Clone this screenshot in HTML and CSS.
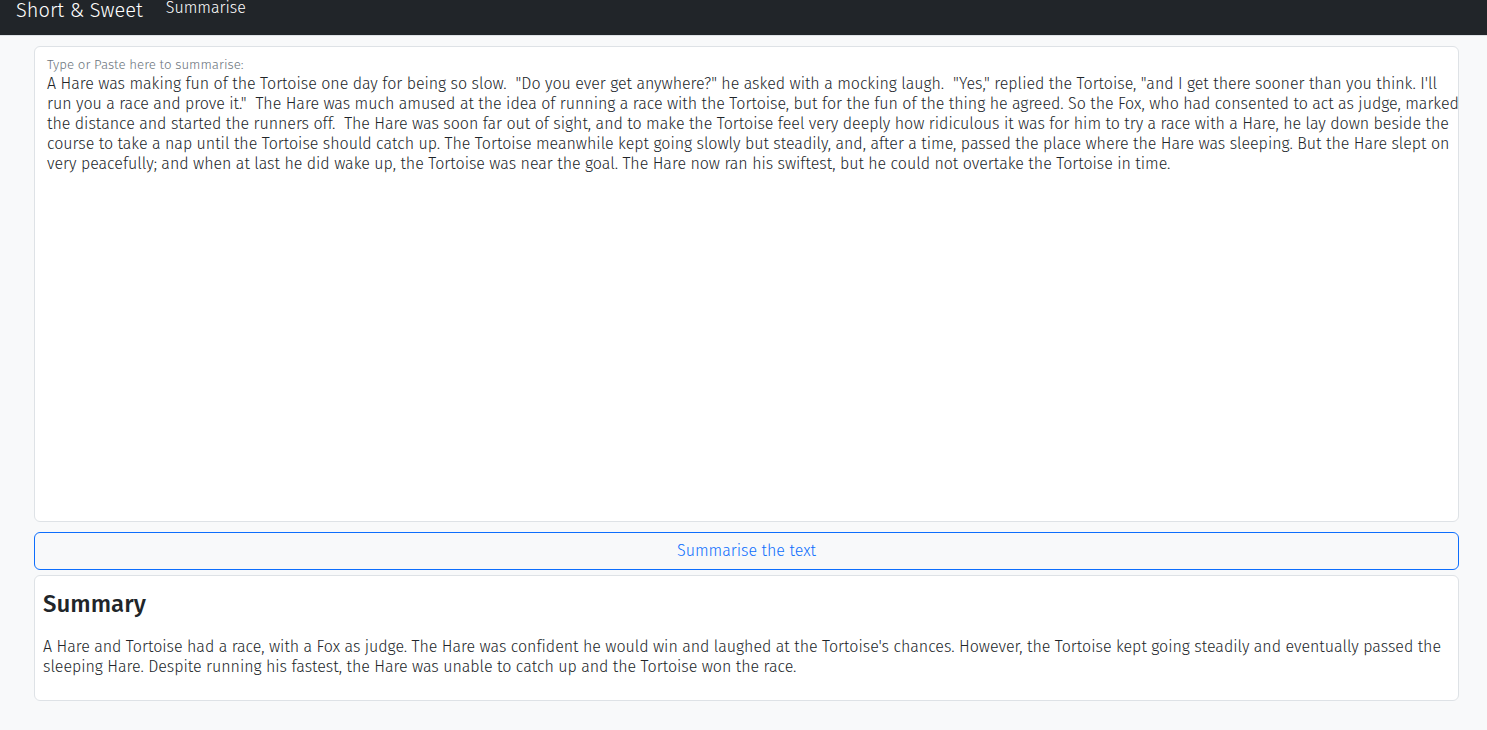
FILE: index.html
```html
<!DOCTYPE html>
<html lang="en">
<head>
<meta charset="utf-8">
<title>Short &amp; Sweet</title>
<link rel="stylesheet" href="styles.css">
</head>
<body>
<nav class="navbar">
  <span class="brand">Short &amp; Sweet</span>
  <span class="nav-link">Summarise</span>
</nav>
<main class="container">
  <div class="floating">
    <label class="float-label">Type or Paste here to summarise:</label>
    <div class="input-text">
      <div class="line">A Hare was making fun of the Tortoise one day for being so slow.  "Do you ever get anywhere?" he asked with a mocking laugh.  "Yes," replied the Tortoise, "and I get there sooner than you think. I'll</div>
      <div class="line">run you a race and prove it."  The Hare was much amused at the idea of running a race with the Tortoise, but for the fun of the thing he agreed. So the Fox, who had consented to act as judge, marked</div>
      <div class="line">the distance and started the runners off.  The Hare was soon far out of sight, and to make the Tortoise feel very deeply how ridiculous it was for him to try a race with a Hare, he lay down beside the</div>
      <div class="line">course to take a nap until the Tortoise should catch up. The Tortoise meanwhile kept going slowly but steadily, and, after a time, passed the place where the Hare was sleeping. But the Hare slept on</div>
      <div class="line">very peacefully; and when at last he did wake up, the Tortoise was near the goal. The Hare now ran his swiftest, but he could not overtake the Tortoise in time.</div>
    </div>
  </div>
  <button class="btn-outline">Summarise the text</button>
  <section class="card">
    <h2 class="card-title">Summary</h2>
    <div class="summary-text">
      <div class="line">A Hare and Tortoise had a race, with a Fox as judge. The Hare was confident he would win and laughed at the Tortoise's chances. However, the Tortoise kept going steadily and eventually passed the</div>
      <div class="line">sleeping Hare. Despite running his fastest, the Hare was unable to catch up and the Tortoise won the race.</div>
    </div>
  </section>
</main>
</body>
</html>
```
FILE: styles.css
```css
* { box-sizing: border-box; }
html, body { margin: 0; padding: 0; }
body {
  background: #f8f9fa;
  font-family: "Fira Sans", "Lato", "Noto Sans", sans-serif;
  font-weight: 300;
  color: #212529;
  font-size: 16px;
  line-height: 20px;
}
.navbar {
  height: 36px;
  background: #212529;
  border-bottom: 1px solid #dee2e6;
  display: flex;
  align-items: flex-start;
  padding: 0 16px;
}
.brand {
  color: #fff;
  font-size: 20px;
  line-height: 20px;
  margin-top: 0;
  margin-right: 23px;
}
.nav-link {
  color: #fff;
  font-size: 16px;
  line-height: 16px;
  margin-top: 0;
}
.container {
  padding: 10px 28px 0 34px;
  display: flex;
  flex-direction: column;
}
.floating {
  background: #fff;
  border: 1px solid #dee2e6;
  border-radius: 6px;
  height: 476px;
  padding: 10px 12px 0 12px;
}
.float-label {
  display: block;
  font-size: 13.3px;
  line-height: 16px;
  color: #6c757d;
  margin-bottom: 1px;
}
.line { white-space: pre; letter-spacing: -0.02px; }
.input-text { color: #212529; }
.btn-outline {
  margin-top: 10px;
  height: 38px;
  border: 1px solid #0d6efd;
  border-radius: 6px;
  background: transparent;
  color: #0d6efd;
  font-family: inherit;
  font-weight: 300;
  font-size: 16px;
  line-height: 20px;
}
.card {
  margin-top: 5px;
  background: #fff;
  border: 1px solid #dee2e6;
  border-radius: 6px;
  height: 126px;
  padding: 14px 8px 0 8px;
}
.card-title {
  margin: 0;
  font-size: 24px;
  line-height: 28px;
  font-weight: 500;
}
.summary-text {
  margin-top: 19px;
}
```
